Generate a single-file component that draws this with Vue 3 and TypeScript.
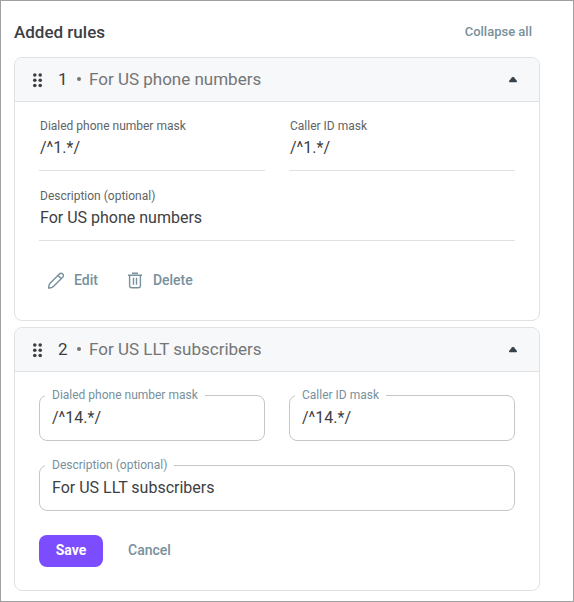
<script setup lang="ts">
import { computed, ref } from 'vue'

interface Rule {
  id: number
  dialedMask: string
  callerMask: string
  description: string
  expanded: boolean
  draft: Draft | null
}

interface Draft {
  dialedMask: string
  callerMask: string
  description: string
}

const rules = ref<Rule[]>([
  {
    id: 1,
    dialedMask: '/^1.*/',
    callerMask: '/^1.*/',
    description: 'For US phone numbers',
    expanded: true,
    draft: null,
  },
  {
    id: 2,
    dialedMask: '/^14.*/',
    callerMask: '/^14.*/',
    description: 'For US LLT subscribers',
    expanded: true,
    draft: { dialedMask: '/^14.*/', callerMask: '/^14.*/', description: 'For US LLT subscribers' },
  },
])

const anyExpanded = computed(() => rules.value.some((rule) => rule.expanded))

function toggleAll(): void {
  const next = !anyExpanded.value
  rules.value.forEach((rule) => (rule.expanded = next))
}

function edit(rule: Rule): void {
  rule.draft = {
    dialedMask: rule.dialedMask,
    callerMask: rule.callerMask,
    description: rule.description,
  }
}

function save(rule: Rule): void {
  if (rule.draft) Object.assign(rule, rule.draft)
  rule.draft = null
}

function remove(id: number): void {
  rules.value = rules.value.filter((rule) => rule.id !== id)
}
</script>

<template>
  <main class="panel">
    <header class="panel-head">
      <h1>Added rules</h1>
      <button type="button" class="collapse" @click="toggleAll">
        {{ anyExpanded ? 'Collapse all' : 'Expand all' }}
      </button>
    </header>

    <div class="rules">
      <section v-for="(rule, index) in rules" :key="rule.id" class="card">
        <header class="card-head" :class="{ closed: !rule.expanded }">
          <svg class="grip" viewBox="0 0 18 18" aria-hidden="true">
            <circle cx="6.8" cy="4" r="1.8" />
            <circle cx="12.2" cy="4" r="1.8" />
            <circle cx="6.8" cy="9.2" r="1.8" />
            <circle cx="12.2" cy="9.2" r="1.8" />
            <circle cx="6.8" cy="14.5" r="1.8" />
            <circle cx="12.2" cy="14.5" r="1.8" />
          </svg>
          <h2>
            <span class="number">{{ index + 1 }}</span>
            <i class="dot"></i>
            <span>{{ rule.description }}</span>
          </h2>
          <button
            type="button"
            class="toggle"
            :aria-expanded="rule.expanded"
            :aria-label="rule.expanded ? 'Collapse' : 'Expand'"
            @click="rule.expanded = !rule.expanded"
          >
            <svg viewBox="0 0 18 18" aria-hidden="true">
              <path d="M8.2 6.2 Q9 5.4 9.8 6.2 L12.6 9.4 Q13.6 11.3 12.2 11.3 H5.8 Q4.4 11.3 5.4 9.4 Z" />
            </svg>
          </button>
        </header>

        <form v-if="rule.expanded && rule.draft" class="card-body" @submit.prevent="save(rule)">
          <div class="fields">
            <fieldset class="box">
              <legend><label :for="`dialed-${rule.id}`">Dialed phone number mask</label></legend>
              <input :id="`dialed-${rule.id}`" v-model="rule.draft.dialedMask" type="text" />
            </fieldset>
            <fieldset class="box">
              <legend><label :for="`caller-${rule.id}`">Caller ID mask</label></legend>
              <input :id="`caller-${rule.id}`" v-model="rule.draft.callerMask" type="text" />
            </fieldset>
            <fieldset class="box wide">
              <legend><label :for="`description-${rule.id}`">Description (optional)</label></legend>
              <input :id="`description-${rule.id}`" v-model="rule.draft.description" type="text" />
            </fieldset>
          </div>
          <div class="actions form-actions">
            <button type="submit" class="btn primary">Save</button>
            <button type="button" class="btn plain" @click="rule.draft = null">Cancel</button>
          </div>
        </form>

        <div v-else-if="rule.expanded" class="card-body">
          <dl class="fields">
            <div class="line">
              <dt>Dialed phone number mask</dt>
              <dd>{{ rule.dialedMask }}</dd>
            </div>
            <div class="line">
              <dt>Caller ID mask</dt>
              <dd>{{ rule.callerMask }}</dd>
            </div>
            <div class="line wide">
              <dt>Description (optional)</dt>
              <dd>{{ rule.description }}</dd>
            </div>
          </dl>
          <div class="actions">
            <button type="button" class="btn" @click="edit(rule)">
              <svg viewBox="0 0 18 18" aria-hidden="true">
                <path d="M1.7 17 Q1.5 13.8 3.1 12.2 L12.4 2.9 Q14 1.5 15.7 3 Q17.2 4.6 15.7 6.3 L6.4 15.6 Q4.8 17.2 1.7 17 Z" />
                <path d="M11 4.4 L14.2 7.6" />
              </svg>
              Edit
            </button>
            <button type="button" class="btn" @click="remove(rule.id)">
              <svg viewBox="0 0 18 18" aria-hidden="true">
                <path d="M2 4.2 H16" />
                <path d="M6 2.2 H12" />
                <path d="M3.6 4.2 V14.4 Q3.6 16.7 5.9 16.7 H12.1 Q14.4 16.7 14.4 14.4 V4.2" />
                <path d="M7.5 6.8 V13.8 M10.5 6.8 V13.8" />
              </svg>
              Delete
            </button>
          </div>
        </div>
      </section>
    </div>
  </main>
</template>

<style>
body {
  background: #fff;
}
</style>

<style scoped>
.panel {
  box-sizing: border-box;
  min-height: 100vh;
  padding: 19px 33px 10px 13px;
  border: 1px solid #a0a0a0;
  color: #3d4043;
  font-family: Roboto, 'Liberation Sans', sans-serif;
  font-size: 16px;
  line-height: 24px;
}

h1,
h2,
dl,
dd {
  margin: 0;
}

button {
  padding: 0;
  border: 0;
  background: none;
  color: #78909c;
  font: inherit;
  font-weight: 500;
  cursor: pointer;
}

.panel-head {
  display: flex;
  align-items: center;
  justify-content: space-between;
  margin-bottom: 13px;
}

h1 {
  font-size: 17px;
  font-weight: 500;
}

.collapse {
  padding: 0 8px;
  font-size: 13px;
}

.rules {
  display: grid;
  gap: 6px;
}

.card {
  overflow: hidden;
  border: 1px solid #e0e1e2;
  border-radius: 8px;
}

.card-head {
  display: flex;
  align-items: center;
  gap: 12px;
  min-height: 43px;
  padding: 0 17px 0 13px;
  border-bottom: 1px solid #e0e1e2;
  background: #f7f8fa;
}

.card-head.closed {
  border-bottom: 0;
}

.grip {
  width: 18px;
  height: 18px;
  fill: #3d4043;
}

h2 {
  display: flex;
  flex: 1;
  align-items: center;
  gap: 8px;
  padding-bottom: 1px;
  color: #757575;
  font-size: 17px;
  font-weight: 400;
}

.number {
  min-width: 11px;
  color: #3d4043;
}

.dot {
  width: 4px;
  height: 4px;
  border-radius: 50%;
  background: #757575;
}

.toggle {
  display: flex;
}

.toggle svg {
  width: 18px;
  height: 18px;
  fill: #37414a;
}

.card-body {
  padding: 16px 24px 23px;
}

.fields {
  display: grid;
  grid-template-columns: 1fr 1fr;
  gap: 17px 24px;
}

.wide {
  grid-column: 1 / -1;
}

.line {
  box-sizing: border-box;
  height: 53px;
  padding: 0 1px;
  border-bottom: 1px solid #e0e1e2;
}

dt {
  color: #616466;
  font-size: 12px;
  line-height: 16px;
}

dd {
  padding-top: 2px;
}

.box {
  box-sizing: border-box;
  min-width: 0;
  height: 53px;
  margin: 0;
  padding: 0 5px;
  border: 1px solid #c4c6c8;
  border-radius: 8px;
}

legend {
  padding: 0 7px;
  color: #78909c;
  font-size: 12px;
  line-height: 15px;
}

.box input {
  display: block;
  box-sizing: border-box;
  width: 100%;
  height: 28px;
  padding: 0 7px;
  border: 0;
  outline: 0;
  background: none;
  color: inherit;
  font: inherit;
}

.actions {
  display: flex;
  gap: 12px;
  margin-top: 24px;
}

.form-actions {
  gap: 9px;
}

.btn {
  display: flex;
  align-items: center;
  justify-content: center;
  gap: 9px;
  height: 32px;
  padding: 0 8px 2px;
  border-radius: 8px;
  font-size: 14px;
}

.btn svg {
  width: 18px;
  height: 18px;
  fill: none;
  stroke: currentColor;
  stroke-width: 1.4;
}

.btn.primary,
.btn.plain {
  min-width: 64px;
  padding: 0 16px 2px;
}

.btn.primary {
  background: #7c4dff;
  color: #fff;
  font-weight: 700;
}
</style>
